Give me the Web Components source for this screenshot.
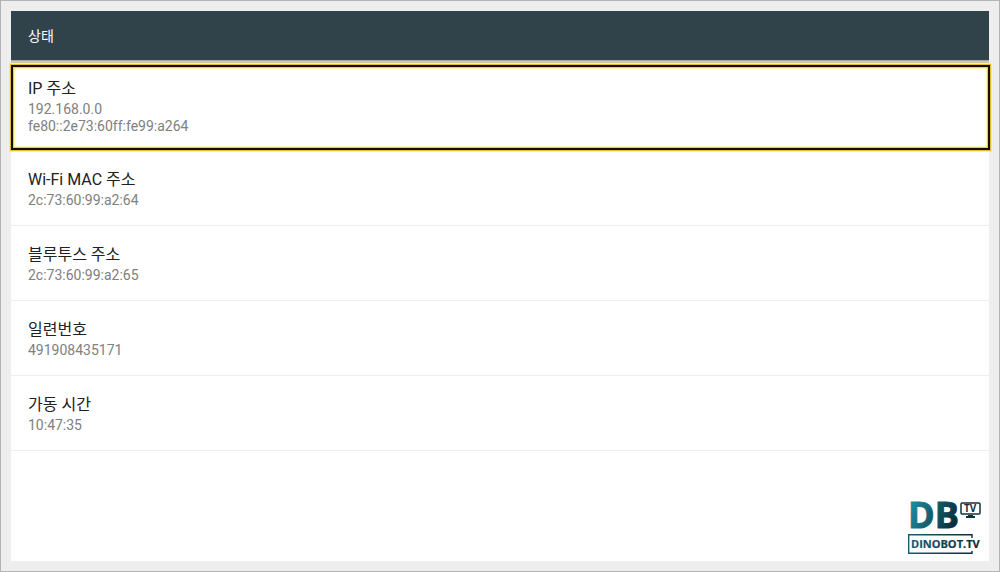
<!DOCTYPE html>
<html lang="ko">
<head>
<meta charset="utf-8">
<title>상태</title>
<style>
html{height:100%}
body{margin:0;min-height:100%;display:grid;font-family:Roboto,"Noto Sans CJK KR",sans-serif;color:#212121}
</style>
</head>
<body>
<status-page>
  <status-header>상태</status-header>
  <status-list>
    <status-row selected label="IP 주소"><div>192.168.0.0</div><div>fe80::2e73:60ff:fe99:a264</div></status-row>
    <status-row label="Wi-Fi MAC 주소">2c:73:60:99:a2:64</status-row>
    <status-row label="블루투스 주소">2c:73:60:99:a2:65</status-row>
    <status-row label="일련번호">491908435171</status-row>
    <status-row label="가동 시간">10:47:35</status-row>
  </status-list>
  <brand-logo></brand-logo>
</status-page>
<script>
const define = (name, html) => {
  const template = document.createElement('template');
  template.innerHTML = html;
  customElements.define(name, class extends HTMLElement {
    constructor() {
      super();
      this.attachShadow({mode: 'open'}).append(template.content.cloneNode(true));
    }
    connectedCallback() {
      const title = this.shadowRoot.querySelector('.title');
      if (title) title.textContent = this.getAttribute('label');
    }
  });
};

define('status-page', `
<style>
:host{display:grid;box-sizing:border-box;min-height:100vh;padding:10px;border:1px solid #b4b4b4;background:#eee}
main{display:flex;flex-direction:column;background:#fff}
::slotted(brand-logo){margin:auto 7px 6px auto}
</style>
<main><slot></slot></main>`);

define('status-header', `
<style>
:host{display:block;background:#30434b;border-bottom:1px solid #a5a9a8;box-shadow:0 2px 0 #d3c8a4;color:#fff}
h1{margin:0;padding:1px 17px 0;font-size:14px;line-height:48px;font-weight:400}
</style>
<h1><slot></slot></h1>`);

define('status-list', `
<style>:host{display:block}</style>
<slot></slot>`);

define('status-row', `
<style>
:host{display:block;position:relative;padding:17px 17px 16px;border-bottom:1px solid #eee}
:host([selected]){padding:16px 17px 15px;border-bottom-color:#fff}
:host([selected])::after{content:"";position:absolute;inset:4px -1px 0 0;border:2px solid #110d00;box-shadow:0 0 0 1px #e0bd30,0 0 0 2px #eedb8080,inset 0 0 0 1px #ecd03c,inset 0 0 0 2px #fff9a8}
h2{margin:0;font-size:16px;line-height:24px;font-weight:400}
.value{font-size:14px;line-height:17px;color:#808080}
</style>
<h2 class="title"></h2>
<div class="value"><slot></slot></div>`);

define('brand-logo', `
<style>
:host{display:block;width:74px;height:70px}
svg{display:block}
text{font-family:"Open Sans",sans-serif;font-weight:700}
</style>
<svg width="74" height="70" viewBox="0 -16 74 70" role="img" aria-label="DB TV DINOBOT.TV">
  <defs>
    <linearGradient id="g" gradientUnits="userSpaceOnUse" x1="2" y1="8" x2="50" y2="26"><stop stop-color="#1c8a9e"/><stop offset="1" stop-color="#0a2532"/></linearGradient>
    <linearGradient id="f" gradientUnits="userSpaceOnUse" x1="0" y1="0" x2="74" y2="0"><stop stop-color="#1a5d70"/><stop offset="1" stop-color="#0a2532"/></linearGradient>
  </defs>
  <text x="0" y="27" font-size="36" fill="url(#g)" stroke="url(#g)" stroke-width="1">DB</text>
  <rect x="53" y="2" width="19" height="11" rx="1" fill="none" stroke="#12303d" stroke-width="1.5"/>
  <text x="56" y="11" font-size="10" fill="#12303d">TV</text>
  <path d="M60 14h5v1h2v2h-9v-2h2z" fill="#12303d"/>
  <path d="M64 37V33.700H.7V52.300H64V50" fill="none" stroke="url(#f)" stroke-width="1.400"/>
  <text x="3" y="47" font-size="11" fill="url(#f)" stroke="url(#f)" stroke-width=".2">DINOBOT.TV</text>
</svg>`);
</script>
</body>
</html>
